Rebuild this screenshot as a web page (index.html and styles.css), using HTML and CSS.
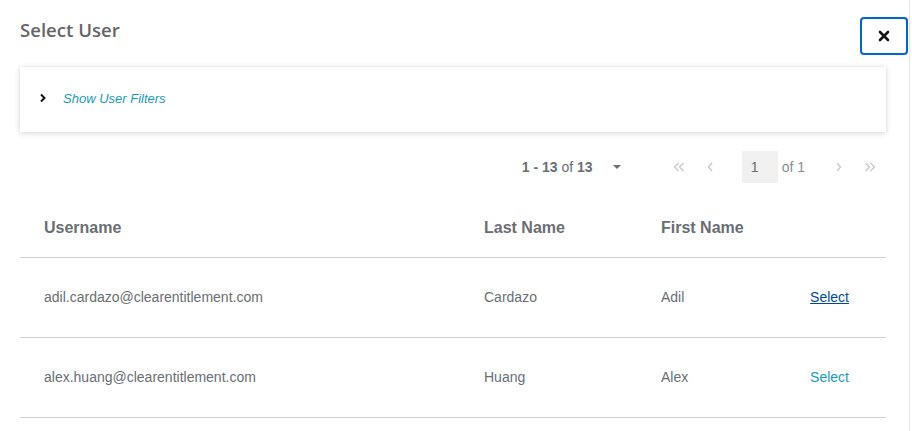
FILE: index.html
```html
<!DOCTYPE html>
<html>
<head>
<meta charset="utf-8">
<link rel="stylesheet" href="styles.css">
</head>
<body>
<div class="modal">
  <div class="header">
    <h1 class="title">Select User</h1>
    <button class="close" aria-label="Close">
      <svg width="12" height="12" viewBox="0 0 12 12"><path d="M2 2 L10 10 M10 2 L2 10" stroke="#151515" stroke-width="2.6" stroke-linecap="round"/></svg>
    </button>
  </div>
  <div class="filters">
    <svg class="chev" width="8" height="10" viewBox="0 0 8 10"><path d="M2 1.5 L5.5 5 L2 8.5" fill="none" stroke="#151515" stroke-width="2"/></svg>
    <span class="filters-link">Show User Filters</span>
  </div>
  <div class="pager">
    <div class="toggle">
      <span><b>1 - 13</b> of <b>13</b></span>
      <svg width="10" height="6" viewBox="0 0 10 6"><path d="M1 1 L9 1 L5 5 Z" fill="#6a6e73"/></svg>
    </div>
    <div class="nav">
      <span class="nbtn"><svg width="12" height="10" viewBox="0 0 12 10"><path d="M5.5 1 L1.5 5 L5.5 9 M10.5 1 L6.5 5 L10.5 9" fill="none" stroke="#c7c9cc" stroke-width="1.4"/></svg></span>
      <span class="nbtn"><svg width="7" height="10" viewBox="0 0 7 10"><path d="M5 1 L1.5 5 L5 9" fill="none" stroke="#c7c9cc" stroke-width="1.4"/></svg></span>
      <span class="page-input">1</span>
      <span class="of">of 1</span>
      <span class="nbtn gap"><svg width="7" height="10" viewBox="0 0 7 10"><path d="M2 1 L5.5 5 L2 9" fill="none" stroke="#c7c9cc" stroke-width="1.4"/></svg></span>
      <span class="nbtn"><svg width="12" height="10" viewBox="0 0 12 10"><path d="M1.5 1 L5.5 5 L1.5 9 M6.5 1 L10.5 5 L6.5 9" fill="none" stroke="#c7c9cc" stroke-width="1.4"/></svg></span>
    </div>
  </div>
  <div class="table">
    <div class="row head">
      <div class="cell">Username</div>
      <div class="cell">Last Name</div>
      <div class="cell">First Name</div>
      <div class="cell act"></div>
    </div>
    <div class="row">
      <div class="cell">adil.cardazo@clearentitlement.com</div>
      <div class="cell">Cardazo</div>
      <div class="cell">Adil</div>
      <div class="cell act"><a class="sel hover">Select</a></div>
    </div>
    <div class="row">
      <div class="cell">alex.huang@clearentitlement.com</div>
      <div class="cell">Huang</div>
      <div class="cell">Alex</div>
      <div class="cell act"><a class="sel">Select</a></div>
    </div>
  </div>
</div>
</body>
</html>
```

FILE: styles.css
```css
html, body {
  margin: 0;
  padding: 0;
  background: #fff;
}
body {
  font-family: "Liberation Sans", Arial, sans-serif;
  color: #6a6e73;
  overflow: hidden;
}
.modal {
  width: 909px;
  height: 431px;
  border-right: 1px solid #e6e6e6;
  box-sizing: content-box;
}
.header {
  display: flex;
  justify-content: space-between;
  align-items: flex-start;
  padding-left: 20px;
  padding-right: 1px;
  height: 54px;
}
.title {
  margin: 0;
  padding-top: 16px;
  font-family: "Open Sans", sans-serif;
  font-weight: 600;
  font-size: 18.6px;
  line-height: 28px;
  color: #666;
}
.close {
  margin-top: 17px;
  width: 48px;
  height: 38px;
  border: 2px solid #0066cc;
  border-radius: 4px;
  background: #fff;
  display: flex;
  align-items: center;
  justify-content: center;
  padding: 0;
}
.filters {
  margin: 13px 0 0 20px;
  width: 866px;
  height: 65px;
  box-shadow: 0 1px 6px rgba(0, 0, 0, 0.16), 0 0 2px rgba(0,0,0,0.06);
  display: flex;
  align-items: center;
  padding-left: 19px;
  box-sizing: border-box;
  padding-bottom: 3px;
}
.chev { margin-right: 16px; }
.filters-link {
  font-style: italic;
  font-size: 13px;
  color: #1a9bb8;
}
.pager {
  margin-top: 19px;
  height: 32px;
  display: flex;
  justify-content: flex-end;
  align-items: center;
  padding-right: 23px;
  font-size: 14px;
}
.toggle {
  display: flex;
  align-items: center;
  gap: 19px;
  margin-right: 41px;
  color: #6a6e73;
}
.toggle b { font-weight: 700; }
.nav {
  display: flex;
  align-items: center;
  height: 32px;
}
.nbtn {
  width: 32px;
  height: 32px;
  display: flex;
  align-items: center;
  justify-content: center;
}
.page-input {
  margin-left: 15px;
  width: 36px;
  height: 32px;
  background: #f0f0f0;
  box-sizing: border-box;
  padding-left: 9px;
  line-height: 32px;
  color: #6a6e73;
}
.of {
  margin-left: 4px;
  color: #8a8d90;
}
.nbtn.gap { margin-left: 17px; }
.table {
  margin: 16px 0 0 20px;
  width: 866px;
}
.row {
  display: grid;
  grid-template-columns: 440px 177px 1fr auto;
  align-items: center;
  height: 80px;
  border-bottom: 1px solid #d2d2d2;
  box-sizing: border-box;
  font-size: 14px;
  padding-bottom: 2px;
}
.row.head {
  height: 59px;
  font-size: 16px;
  font-weight: 700;
  padding-bottom: 0;
}
.cell { padding-left: 24px; }
.act { padding-right: 37px; }
.sel {
  color: #1a9bb8;
  cursor: pointer;
}
.sel.hover {
  color: #004b95;
  text-decoration: underline;
}
```
